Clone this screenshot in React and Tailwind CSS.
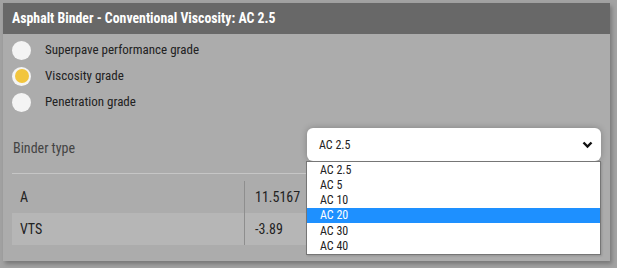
import React from 'react'

const options = ['AC 2.5', 'AC 5', 'AC 10', 'AC 20', 'AC 30', 'AC 40']

const grades = [
  { label: 'Superpave performance grade', checked: false },
  { label: 'Viscosity grade', checked: true },
  { label: 'Penetration grade', checked: false },
]

const Radio = ({ checked }) => (
  <span className="flex h-[19px] w-[19px] items-center justify-center rounded-full bg-[#f4f4f4]">
    {checked && <span className="h-[14px] w-[14px] rounded-full bg-[#f2c53d]" />}
  </span>
)

const App = () => {
  return (
    <div className="h-[268px] w-[617px] bg-[#a2a2a2] pl-[3px] pt-[3px] font-[family-name:'Roboto_Condensed','Liberation_Sans_Narrow','DejaVu_Sans_Condensed',Roboto,sans-serif]">
      <div className="h-[258px] w-[607px] overflow-visible bg-[#acacac] shadow-[2px_3px_4px_rgba(0,0,0,0.25)]">
        <div className="flex h-[31px] items-center bg-[#686868] px-[9px] text-[13.8px] font-bold text-white">
          Asphalt Binder - Conventional Viscosity: AC 2.5
        </div>

        <div className="px-[9px]">
          <div className="pt-[3px]">
            {grades.map((g) => (
              <div className="flex h-[26px] items-center gap-[14px]" key={g.label}>
                <Radio checked={g.checked} />
                <span className="text-[13px] text-[#222]">{g.label}</span>
              </div>
            ))}
          </div>

          <div className="mt-[13px] flex items-start justify-between">
            <span className="pt-[10px] pl-[1px] text-[14px] text-[#444]">Binder type</span>
            <div className="relative w-[294px]">
              <div className="flex h-[33px] items-center justify-between rounded-[6px] bg-white pl-[12px] pr-[8px] text-[12px] text-[#222] shadow-[0_0_6px_rgba(0,0,0,0.25)]">
                <span>AC 2.5</span>
                <svg width="11" height="8" viewBox="0 0 11 8">
                  <path d="M1.5 1.5 L5.5 5.5 L9.5 1.5" fill="none" stroke="#111" strokeWidth="2.4" />
                </svg>
              </div>
              <div className="absolute left-[-1px] top-[33px] z-10 w-[295px] border border-[#767676] bg-white text-[12px] text-[#222] shadow-[1px_1px_2px_rgba(0,0,0,0.15)]">
                {options.map((o) => (
                  <div
                    key={o}
                    className={
                      o === 'AC 20'
                        ? 'flex h-[15.25px] items-center bg-[#1e90ff] pl-[13px] text-white'
                        : 'flex h-[15.25px] items-center pl-[13px]'
                    }
                  >
                    {o}
                  </div>
                ))}
              </div>
            </div>
          </div>

          <div className="mt-[12px] border-t border-[#c6c6c6] pt-[7px]">
            <div className="flex h-[32px] items-center text-[14px] text-[#222]">
              <span className="w-[233px] border-r border-[#8e8e8e] pl-[8px] leading-[32px]">A</span>
              <span className="pl-[10px]">11.5167</span>
            </div>
            <div className="flex h-[32px] items-center bg-[#b6b6b6] text-[14px] text-[#222]">
              <span className="w-[233px] border-r border-[#8e8e8e] pl-[8px] leading-[32px]">VTS</span>
              <span className="pl-[10px]">-3.89</span>
            </div>
          </div>
        </div>
      </div>
    </div>
  )
}

export default App
